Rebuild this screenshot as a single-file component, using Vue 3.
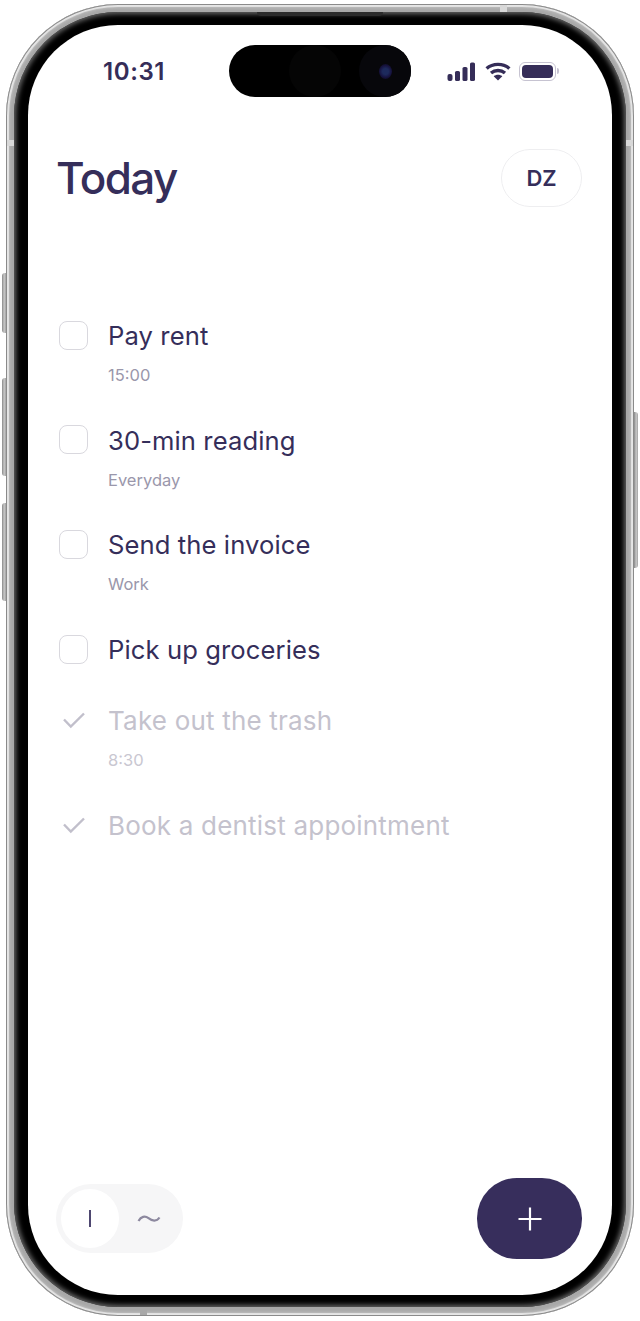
<script setup>
const tasks = [
  { title: 'Pay rent', sub: '15:00', done: false },
  { title: '30-min reading', sub: 'Everyday', done: false },
  { title: 'Send the invoice', sub: 'Work', done: false },
  { title: 'Pick up groceries', sub: '', done: false },
  { title: 'Take out the trash', sub: '8:30', done: true },
  { title: 'Book a dentist appointment', sub: '', done: true }
]
</script>

<template>
  <div class="page">
    <div class="phone">
      <span class="side vol-mute"></span>
      <span class="side vol-up"></span>
      <span class="side vol-down"></span>
      <span class="side power"></span>
      <span class="band band-lt"></span>
      <span class="band band-rt"></span>
      <span class="band band-tr"></span>
      <span class="band band-bl"></span>
      <span class="speaker"></span>
      <div class="bezel">
        <div class="screen">
          <div class="status">
            <span class="time">10:31</span>
            <div class="island">
              <span class="ring"></span>
              <span class="cam"><span class="lens"></span></span>
            </div>
            <div class="sys">
              <svg width="29" height="19" viewBox="0 0 29 19" class="signal">
                <rect x="0.5" y="12" width="5" height="7" rx="2" />
                <rect x="8" y="9" width="5" height="10" rx="1.6" />
                <rect x="15.5" y="5" width="5" height="14" rx="1.6" />
                <rect x="23" y="0.5" width="5" height="18.5" rx="1.6" />
              </svg>
              <svg width="26" height="19" viewBox="0 0 26 19" class="wifi">
                <path d="M1.6 6.6C7.8 1 18.2 1 24.4 6.6" />
                <path d="M6 11C10 7.6 16 7.6 20 11" />
                <path class="wifi-dot" d="M13 18.6 8.7 14.2C11.2 12.2 14.8 12.2 17.3 14.2Z" />
              </svg>
              <div class="battery"><span class="cell"></span><span class="cap"></span></div>
            </div>
          </div>

          <header class="head">
            <h1>Today</h1>
            <div class="avatar">DZ</div>
          </header>

          <ul class="list">
            <li v-for="t in tasks" :key="t.title" class="task" :class="{ done: t.done }">
              <span class="mark">
                <svg v-if="t.done" width="24" height="18" viewBox="0 0 24 18"><path d="M2 8.5 8.8 15.5 22 2.5" /></svg>
                <span v-else class="box"></span>
              </span>
              <div class="body">
                <div class="title">{{ t.title }}</div>
                <div v-if="t.sub" class="sub">{{ t.sub }}</div>
              </div>
            </li>
          </ul>

          <footer class="foot">
            <div class="toggle">
              <span class="knob"><span class="bar"></span></span>
              <svg width="24" height="12" viewBox="0 0 24 12" class="tilde"><path d="M1.5 8C4 3.5 8 2.5 11.5 5.2S19.5 9 22.5 4.5" /></svg>
            </div>
            <button class="fab" type="button" aria-label="Add">
              <svg width="24" height="24" viewBox="0 0 24 24"><path d="M12 0.5V23.5M0.5 12H23.5" /></svg>
            </button>
          </footer>
        </div>
      </div>
    </div>
  </div>
</template>

<style>
html, body { margin: 0; background: #fff; }
</style>

<style scoped>
* { box-sizing: border-box; }
.page {
  width: 640px;
  height: 1321px;
  padding: 4px 6px 5px;
  background: #fff;
  font-family: Inter, "Liberation Sans", sans-serif;
  color: #352e5a;
  overflow: hidden;
}
.phone {
  position: relative;
  height: 100%;
  padding: 8px 8px 9px;
  border-radius: 112px;
  background: #a8a8a8;
  box-shadow: inset 0 0 0 1px #8a8a8a, inset 0 0 1px 3px #e6e6e6, inset 0 0 2px 5px #b2b2b2;
}
.bezel {
  height: 100%;
  padding: 13px 14px 12px;
  border-radius: 104px;
  background: #000;
  box-shadow: inset 0 0 5px 2px #6a6a6a;
}
.screen {
  height: 100%;
  display: flex;
  flex-direction: column;
  border-radius: 90px;
  background: #fff;
  overflow: hidden;
  padding: 20px 30px 36px 29px;
}
.side {
  position: absolute;
  width: 4px;
  background: linear-gradient(90deg, #888, #c8c8c8 55%, #a2a2a2);
}
.vol-mute { left: -4px; top: 269px; height: 60px; border-radius: 3px 0 0 3px; }
.vol-up { left: -4px; top: 374px; height: 98px; border-radius: 3px 0 0 3px; }
.vol-down { left: -4px; top: 499px; height: 98px; border-radius: 3px 0 0 3px; }
.power { right: -4px; top: 408px; height: 156px; border-radius: 0 3px 3px 0; }
.band { position: absolute; background: #d8d8d8; }
.band-lt { left: 1px; top: 136px; width: 7px; height: 6px; }
.band-rt { right: 1px; top: 136px; width: 7px; height: 6px; }
.band-tr { left: 494px; top: 1px; width: 7px; height: 7px; }
.band-bl { left: 134px; bottom: 1px; width: 7px; height: 7px; background: #a8a8a8; }
.speaker {
  position: absolute;
  z-index: 1;
  left: 251px;
  top: 8px;
  width: 126px;
  height: 4px;
  background: #2b2b2b;
  border-radius: 0 0 4px 4px;
}

.status {
  height: 52px;
  flex: none;
  display: flex;
  align-items: center;
}
.time {
  flex: none;
  width: 172px;
  padding-left: 46px;
  font-size: 24px;
  font-weight: 600;
  letter-spacing: 0.6px;
  color: #352d58;
}
.island {
  position: relative;
  width: 182px;
  height: 52px;
  flex: none;
  border-radius: 26px;
  background: #000;
}
.ring {
  position: absolute;
  left: 60px;
  top: 0;
  width: 52px;
  height: 52px;
  border-radius: 50%;
  background: #050505;
}
.cam {
  position: absolute;
  right: 0;
  top: 0;
  width: 52px;
  height: 52px;
  border-radius: 50%;
  background: #07070b;
  display: flex;
  align-items: center;
  justify-content: center;
}
.lens {
  width: 13px;
  height: 15px;
  border-radius: 50%;
  background: radial-gradient(circle, #1d2a5c 0 30%, #16123e 60%, #07070f 100%);
}
.sys {
  flex: 1;
  padding-left: 36px;
  display: flex;
  align-items: center;
  gap: 8px;
}
.signal { fill: #352d58; margin-right: 1px; }
.wifi { fill: none; }
.wifi path { stroke: #352d58; stroke-width: 3.4; }
.wifi .wifi-dot { fill: #352d58; stroke: none; }
.battery {
  position: relative;
  width: 37px;
  height: 19px;
  padding: 2px;
  border: 1.5px solid #c6c3d1;
  border-radius: 6px;
}
.cell {
  display: block;
  height: 100%;
  border-radius: 4px;
  background: #352d58;
}
.cap {
  position: absolute;
  right: -4px;
  top: 5px;
  width: 2px;
  height: 6px;
  border-radius: 0 2px 2px 0;
  background: #c6c3d1;
}

.head {
  flex: none;
  margin-top: 52px;
  height: 58px;
  display: flex;
  align-items: center;
  justify-content: space-between;
}
h1 {
  margin: 0 0 0 -1px;
  font-size: 44px;
  font-weight: 500;
  line-height: 58px;
  letter-spacing: -1.6px;
}
.avatar {
  width: 81px;
  height: 58px;
  border: 1px solid #eeeef0;
  border-radius: 29px;
  display: flex;
  align-items: center;
  justify-content: center;
  font-size: 22px;
  font-weight: 600;
}

.list {
  flex: none;
  list-style: none;
  margin: 114px 0 0;
  padding: 0;
}
.task {
  display: flex;
  padding-bottom: 41px;
}
.mark {
  width: 51px;
  height: 30px;
  margin-top: -1px;
  padding-left: 2px;
  flex: none;
  display: flex;
  align-items: center;
  justify-content: flex-start;
}
.box {
  width: 29px;
  height: 29px;
  border: 1.5px solid #d9d8de;
  border-radius: 8px;
}
.mark svg { margin-left: 3px; fill: none; }
.mark path { stroke: #c1bfcb; stroke-width: 2.4; }
.body { min-width: 0; }
.title {
  font-size: 25.6px;
  line-height: 30px;
  letter-spacing: 0.1px;
  white-space: nowrap;
}
.sub {
  margin-top: 11px;
  margin-bottom: -4.33px;
  height: 27px;
  line-height: 27px;
  font-size: 16.5px;
  color: #9a97ab;
}
.done .title { color: #c4c2cd; font-size: 26px; letter-spacing: 0.2px; }
.done .sub { color: #c9c7d1; }

.foot {
  flex: none;
  margin-top: auto;
  display: flex;
  align-items: center;
  justify-content: space-between;
}
.toggle {
  width: 127px;
  height: 69px;
  margin-left: -1px;
  padding: 5px;
  border-radius: 35px;
  background: #f6f6f7;
  display: flex;
  align-items: center;
  gap: 18px;
}
.knob {
  width: 58px;
  height: 59px;
  flex: none;
  border-radius: 50%;
  background: #fff;
  display: flex;
  align-items: center;
  justify-content: center;
}
.bar {
  width: 2px;
  height: 17px;
  background: #4e4770;
}
.tilde { fill: none; }
.tilde path { stroke: #8d899f; stroke-width: 2.2; }
.fab {
  width: 105px;
  height: 81px;
  padding: 0;
  border: 0;
  border-radius: 40px;
  background: #372e5c;
  display: flex;
  align-items: center;
  justify-content: center;
}
.fab svg { fill: none; }
.fab path { stroke: #fff; stroke-width: 2.2; }
</style>
